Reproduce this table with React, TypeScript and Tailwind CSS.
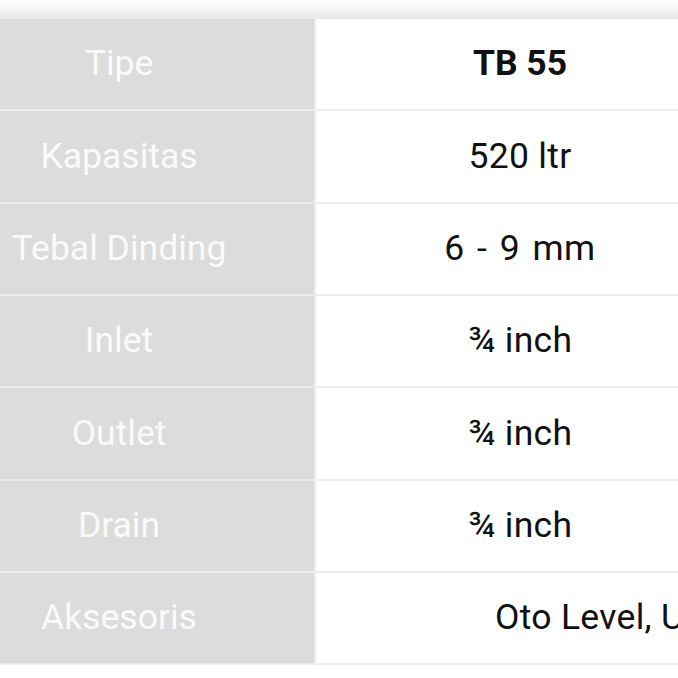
import React from "react";

const rows: { label: string; value: string; bold?: boolean; left?: boolean; wide?: boolean }[] = [
  { label: "Tipe", value: "TB 55", bold: true },
  { label: "Kapasitas", value: "520 ltr" },
  { label: "Tebal Dinding", value: "6 - 9 mm", wide: true },
  { label: "Inlet", value: "¾ inch" },
  { label: "Outlet", value: "¾ inch" },
  { label: "Drain", value: "¾ inch" },
  { label: "Aksesoris", value: "Oto Level, Unit Pompa", left: true },
];

export default function App() {
  return (
    <div
      className="w-[678px] h-[678px] overflow-hidden bg-white"
      style={{ fontFamily: "Roboto, 'Liberation Sans', sans-serif" }}
    >
      <div className="h-[19px] bg-gradient-to-b from-white via-[#f6f6f6] to-[#e8e8e8]" />
      <div className="flex flex-col">
        {rows.map((r, i) => (
          <div key={i} className="flex h-[92.33px]">
            <div className="w-[314px] shrink-0 bg-[#dcdcdc] border-b-2 border-[#ececec] flex items-center justify-center pr-[76px]">
              <span className="text-[35.5px] leading-none text-[#fafafa] whitespace-nowrap">
                {r.label}
              </span>
            </div>
            <div className="w-[2px] shrink-0 bg-[#eeeeee]" />
            <div
              className={
                r.left
                  ? "w-[408px] shrink-0 bg-white border-b-2 border-[#ededed] flex items-center pl-[179px]"
                  : "w-[408px] shrink-0 bg-white border-b-2 border-[#ededed] flex items-center justify-center"
              }
            >
              <span
                className={
                  r.bold
                    ? "text-[35.5px] leading-none font-bold text-[#111111] whitespace-nowrap"
                    : r.wide
                    ? "text-[35.5px] leading-none text-[#111111] whitespace-nowrap tracking-[0.5px] [word-spacing:3px]"
                    : "text-[35.5px] leading-none text-[#111111] whitespace-nowrap tracking-[0.3px]"
                }
              >
                {r.value}
              </span>
            </div>
          </div>
        ))}
      </div>
    </div>
  );
}
